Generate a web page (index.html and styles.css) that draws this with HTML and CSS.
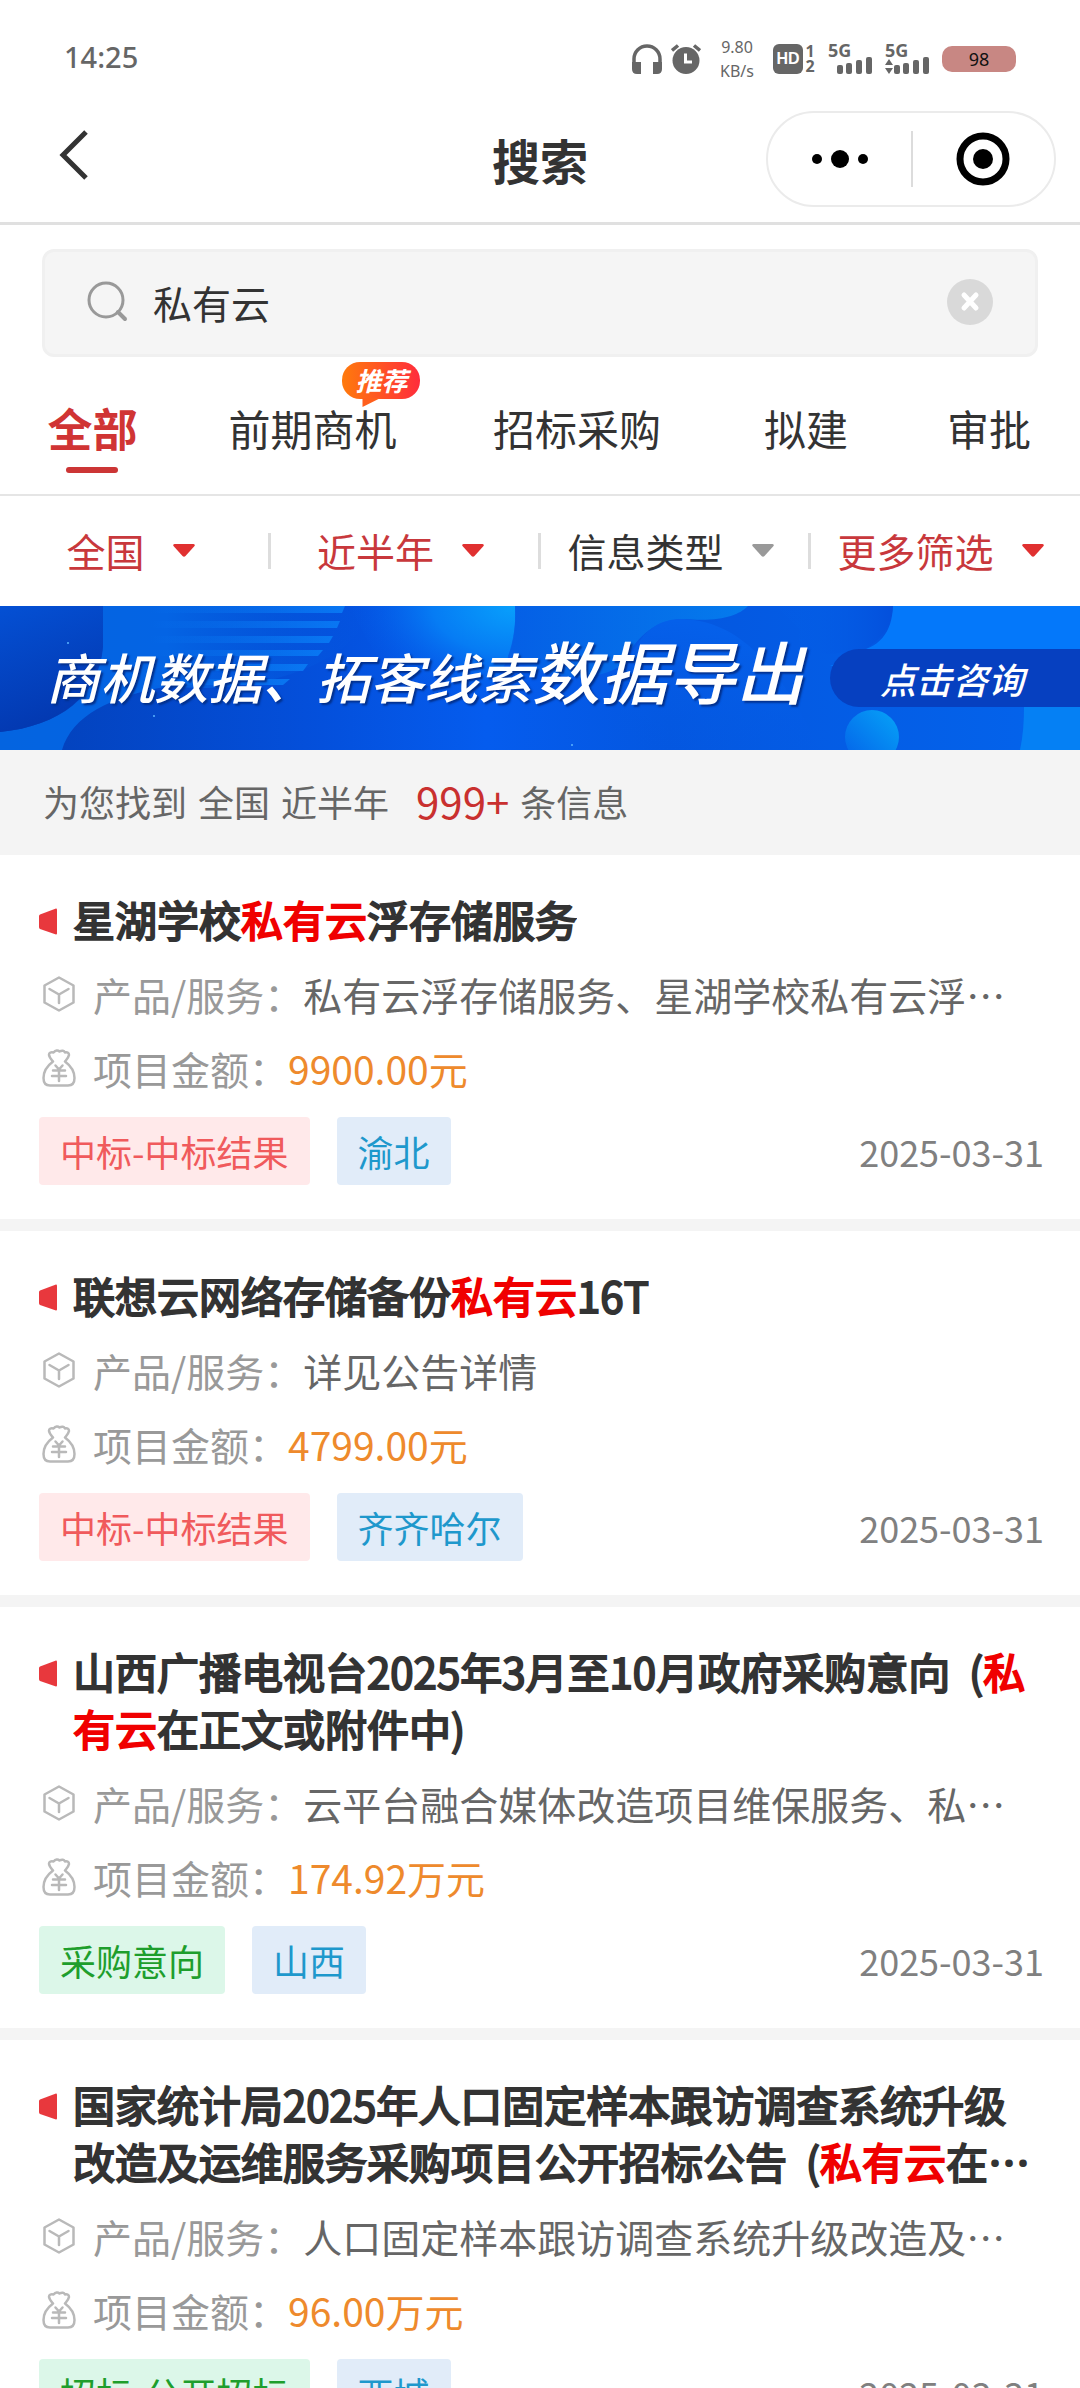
FILE: index.html
```html
<!DOCTYPE html>
<html lang="zh-CN">
<head>
<meta charset="utf-8">
<meta name="viewport" content="width=device-width, initial-scale=1">
<title>搜索</title>
<link rel="stylesheet" href="styles.css">
</head>
<body>
<svg class="defs" aria-hidden="true">
  <symbol id="i-flag" viewBox="0 0 18 27"><path d="M1 6.500Q0 7 0 8V19Q0 20.500 1 21L17 26.500Q18 26.500 18 25.500V1.500Q18 0.500 17 0.500Z" fill="#e8383d"/></symbol>
  <symbol id="i-box" viewBox="0 0 32 36"><g fill="none" stroke="#b9b9b9" stroke-width="2.500" stroke-linejoin="round" stroke-linecap="round"><path d="M16 1.500 30.500 9.500V26.500L16 34.500 1.500 26.500V9.500Z"/><path d="M6.500 13 16 18.500 25.500 13M16 18.500V27"/></g></symbol>
  <symbol id="i-bag" viewBox="0 0 34 38"><g fill="none" stroke="#b9b9b9" stroke-width="2.500" stroke-linejoin="round" stroke-linecap="round"><path d="M11 12.500C9 10 7 8 7 5.500C7 3.500 9 3 11.500 3.500C13.500 1 16 1 17.500 2.500C20 1 22 1.500 23 3.500C25.500 3 27 4 27 6C26.500 8.500 25 10 23 12.500C29 17 32.500 23 32.500 29C32.500 34.500 30 36.500 26 36.500H8C4 36.500 1.500 34.500 1.500 29C1.500 23 5 17 11 12.500Z"/><path d="M13.500 16.500 17 20.500 20.500 16.500M11 21.500H23M10 27H24M17 21V32"/></g></symbol>
  <symbol id="i-caret" viewBox="0 0 22 13"><path d="M1.500 0H20.500Q22.500 0.500 21.500 2L12.500 12Q11 13.500 9.500 12L0.500 2Q-0.500 0.500 1.500 0Z" fill="currentColor"/></symbol>
</svg>

<div class="app">
  <div class="status">
    <span class="clock">14:25</span>
    <div class="status-icons">
      <span class="modes">
        <svg width="30" height="30" viewBox="0 0 30 30"><path d="M2 20V15A13 13 0 0 1 28 15V20" fill="none" stroke="#666" stroke-width="3.500"/><path d="M0 18H9V30H5Q0 30 0 25ZM30 18H21V30H25Q30 30 30 25Z" fill="#666"/></svg>
        <svg width="30" height="30" viewBox="0 0 30 30"><circle cx="15" cy="16.500" r="13.500" fill="#666"/><path d="M1 6.500 7 1.500M29 6.500 23 1.500" stroke="#666" stroke-width="3.500"/><path d="M14.500 9.500V18H21" fill="none" stroke="#fff" stroke-width="3"/></svg>
      </span>
      <span class="speed"><span>9.80</span><span>KB/s</span></span>
      <span class="hd"><span class="hd-box">HD</span><span class="sims"><span>1</span><span>2</span></span></span>
      <span class="signal"><span class="net">5G</span><svg width="44" height="17" viewBox="0 0 44 17" fill="#666"><rect x="9" y="8" width="6" height="9" rx="2"/><rect x="18" y="6" width="6" height="11" rx="2"/><rect x="28" y="3" width="6" height="14" rx="2"/><rect x="38" y="0" width="6" height="17" rx="2"/></svg></span>
      <span class="signal"><span class="net">5G</span><svg width="44" height="17" viewBox="0 0 44 17" fill="#666"><path d="M0 8 4 2 8 8ZM0 11H8L4 17Z"/><rect x="9" y="8" width="6" height="9" rx="2"/><rect x="18" y="6" width="6" height="11" rx="2"/><rect x="28" y="3" width="6" height="14" rx="2"/><rect x="38" y="0" width="6" height="17" rx="2"/></svg></span>
      <span class="battery">98</span>
    </div>
  </div>

  <header class="nav">
    <button class="back" aria-label="返回"><svg width="32" height="50" viewBox="0 0 32 50"><path d="M28 2 5 25 28 48" fill="none" stroke="#333" stroke-width="5"/></svg></button>
    <h1>搜索</h1>
    <div class="capsule">
      <button aria-label="更多"><svg width="58" height="20" viewBox="0 0 58 20"><circle cx="6" cy="10" r="5"/><circle cx="29" cy="10" r="9"/><circle cx="52" cy="10" r="5"/></svg></button>
      <button aria-label="关闭"><svg width="54" height="54" viewBox="0 0 54 54"><circle cx="27" cy="27" r="23" fill="none" stroke="#000" stroke-width="7"/><circle cx="27" cy="27" r="10"/></svg></button>
    </div>
  </header>

  <form class="search">
    <svg width="42" height="42" viewBox="0 0 42 42" fill="none" stroke="#999" stroke-width="3" stroke-linecap="round"><circle cx="19" cy="19" r="17"/><path d="M31 31 38 38" stroke-width="4"/></svg>
    <input type="text" value="私有云" aria-label="搜索">
    <button type="reset" aria-label="清除"><svg width="46" height="46" viewBox="0 0 46 46"><circle cx="23" cy="23" r="23" fill="#d9d9d9"/><path d="M17 16 29 29M29 16 17 29" stroke="#fff" stroke-width="5" stroke-linecap="round"/></svg></button>
  </form>

  <nav class="tabs">
    <a href="#" class="tab active">全部</a>
    <a href="#" class="tab">前期商机<span class="badge">推荐</span></a>
    <a href="#" class="tab">招标采购</a>
    <a href="#" class="tab">拟建</a>
    <a href="#" class="tab">审批</a>
  </nav>

  <div class="filters">
    <button class="filter on">全国<svg width="22" height="13"><use href="#i-caret"/></svg></button>
    <button class="filter on">近半年<svg width="22" height="13"><use href="#i-caret"/></svg></button>
    <button class="filter">信息类型<svg width="22" height="13"><use href="#i-caret"/></svg></button>
    <button class="filter on">更多筛选<svg width="22" height="13"><use href="#i-caret"/></svg></button>
  </div>

  <a class="banner" href="#">
    <svg class="banner-art" viewBox="0 0 1080 144" preserveAspectRatio="none" aria-hidden="true">
      <defs>
        <linearGradient id="base"><stop offset="0" stop-color="#0340b8"/><stop offset=".3" stop-color="#0450dc"/><stop offset=".45" stop-color="#055cee"/><stop offset=".62" stop-color="#0457e0"/><stop offset="1" stop-color="#0464ec"/></linearGradient>
        <linearGradient id="left" x2=".3" y2="1"><stop offset="0" stop-color="#0450d4"/><stop offset="1" stop-color="#0338b0"/></linearGradient>
        <linearGradient id="band"><stop offset="0" stop-color="#0464e0"/><stop offset=".45" stop-color="#0464e4"/><stop offset="1" stop-color="#0458e0" stop-opacity="0"/></linearGradient>
        <linearGradient id="stripe"><stop offset="0" stop-color="#0a80f8" stop-opacity="0"/><stop offset="1" stop-color="#0a80f8" stop-opacity=".8"/></linearGradient>
        <radialGradient id="glow" cx="1" cy="0" r="1"><stop offset="0" stop-color="#08a0fc"/><stop offset=".5" stop-color="#067cf4"/><stop offset="1" stop-color="#055cea" stop-opacity="0"/></radialGradient>
        <linearGradient id="wave"><stop offset="0" stop-color="#0560e4"/><stop offset="1" stop-color="#0584f0"/></linearGradient>
        <linearGradient id="hill" x1=".3" x2="0" y2="1"><stop offset="0" stop-color="#0560ea"/><stop offset="1" stop-color="#0458e2" stop-opacity="0"/></linearGradient>
        <linearGradient id="blob"><stop offset="0" stop-color="#0462ea" stop-opacity="0"/><stop offset="1" stop-color="#0450dc"/></linearGradient>
        <linearGradient id="ball" x1="1" y1="0" x2="0" y2="1"><stop offset="0" stop-color="#06a4f8"/><stop offset="1" stop-color="#0460e8"/></linearGradient>
      </defs>
      <rect width="1080" height="144" fill="url(#base)"/>
      <path d="M103 0H370C360 60 250 90 170 80C110 90 72 110 62 144H0V126C60 120 100 90 103 40Z" fill="url(#band)"/>
      <path d="M0 0H103V40C98 90 60 120 0 126Z" fill="url(#left)"/>
      <g fill="url(#stripe)"><path d="M150 0H345L342 7H150Z"/><path d="M150 15H340L337 22H150Z"/><path d="M150 30H333L329 37H150Z"/><path d="M150 44H323L318 50H150Z"/><path d="M150 58H308L303 65H150Z"/><path d="M150 73H290L283 79H150Z"/></g>
      <path d="M350 0H515C517 36 508 66 480 90C440 110 390 90 350 0Z" fill="url(#glow)"/>
      <path d="M515 0H748C738 10 720 16 684 13C650 14 636 34 620 60C590 80 540 70 508 50C514 34 516 16 515 0Z" fill="url(#wave)" opacity=".8"/>
      <path d="M616 116C630 90 620 64 634 44C646 22 662 12 684 13C740 16 780 60 820 144H600Z" fill="url(#hill)"/>
      <path d="M893 0H1080V60H830C860 48 890 36 893 0Z" fill="#0478fa"/>
      <path d="M775 0H893C892 26 880 44 850 46C810 50 795 50 800 24Z" fill="url(#blob)"/>
      <circle cx="872" cy="131" r="27" fill="url(#ball)"/>
      <path d="M1024 101H1080V144H1020C1023 130 1024 116 1024 101Z" fill="#0580f4"/>
      <g fill="#5ab4ff"><circle cx="68" cy="37" r="1"/><circle cx="154" cy="110" r="1"/><circle cx="572" cy="139" r="1"/></g>
    </svg>
    <span class="slogan">商机数据、拓客线索<strong>数据导出</strong></span>
    <span class="consult">点击咨询</span>
  </a>

  <p class="summary"><span>为您找到</span><span>全国</span><span>近半年</span><span class="count">999+</span><span>条信息</span></p>

  <ul class="results">
    <li class="card">
      <h2><svg class="flag" width="18" height="27"><use href="#i-flag"/></svg><a href="#">星湖学校<em>私有云</em>浮存储服务</a></h2>
      <div class="row"><svg width="34" height="36"><use href="#i-box"/></svg><span>产品/服务：</span><span class="value">私有云浮存储服务、星湖学校私有云浮存储服务项目</span></div>
      <div class="row"><svg width="34" height="38"><use href="#i-bag"/></svg><span>项目金额：</span><span class="money">9900.00元</span></div>
      <div class="foot"><span class="tag red">中标-中标结果</span><span class="tag blue">渝北</span><time>2025-03-31</time></div>
    </li>
    <li class="card">
      <h2><svg class="flag" width="18" height="27"><use href="#i-flag"/></svg><a href="#">联想云网络存储备份<em>私有云</em>16T</a></h2>
      <div class="row"><svg width="34" height="36"><use href="#i-box"/></svg><span>产品/服务：</span><span class="value">详见公告详情</span></div>
      <div class="row"><svg width="34" height="38"><use href="#i-bag"/></svg><span>项目金额：</span><span class="money">4799.00元</span></div>
      <div class="foot"><span class="tag red">中标-中标结果</span><span class="tag blue">齐齐哈尔</span><time>2025-03-31</time></div>
    </li>
    <li class="card">
      <h2><svg class="flag" width="18" height="27"><use href="#i-flag"/></svg><a href="#">山西广播电视台2025年3月至10月政府采购意向&nbsp; (<em>私有云</em>在正文或附件中)</a></h2>
      <div class="row"><svg width="34" height="36"><use href="#i-box"/></svg><span>产品/服务：</span><span class="value">云平台融合媒体改造项目维保服务、私有云平台维保服务</span></div>
      <div class="row"><svg width="34" height="38"><use href="#i-bag"/></svg><span>项目金额：</span><span class="money">174.92万元</span></div>
      <div class="foot"><span class="tag green">采购意向</span><span class="tag blue">山西</span><time>2025-03-31</time></div>
    </li>
    <li class="card">
      <h2><svg class="flag" width="18" height="27"><use href="#i-flag"/></svg><a href="#">国家统计局2025年人口固定样本跟访调查系统升级改造及运维服务采购项目公开招标公告&nbsp; (<em>私有云</em>在正文或附件中)</a></h2>
      <div class="row"><svg width="34" height="36"><use href="#i-box"/></svg><span>产品/服务：</span><span class="value">人口固定样本跟访调查系统升级改造及运维服务</span></div>
      <div class="row"><svg width="34" height="38"><use href="#i-bag"/></svg><span>项目金额：</span><span class="money">96.00万元</span></div>
      <div class="foot"><span class="tag green">招标-公开招标</span><span class="tag blue">西城</span><time>2025-03-31</time></div>
    </li>
  </ul>
</div>
</body>
</html>
```
FILE: styles.css
```css
* {
  box-sizing: border-box;
}

body {
  margin: 0;
  background: #fff;
  color: #333;
  font-family: "Noto Sans CJK SC", sans-serif;
}

h1,
h2,
p,
ul {
  margin: 0;
  padding: 0;
}

a {
  color: inherit;
  text-decoration: none;
}

em {
  font-style: normal;
}

button,
input {
  padding: 0;
  border: 0;
  background: none;
  color: inherit;
  font: inherit;
}

svg {
  display: block;
  flex: none;
}

.defs {
  display: none;
}

.app {
  display: flex;
  flex-direction: column;
  height: 100vh;
  overflow: hidden;
}

.app > * {
  flex: none;
}

/* System status bar */
.status {
  display: flex;
  align-items: center;
  justify-content: space-between;
  height: 100px;
  padding: 18px 64px 0;
  color: #666;
}

.clock {
  padding-bottom: 4px;
  font: 500 29px/30px "Noto Sans", sans-serif;
}

.status-icons {
  display: flex;
  align-items: center;
  gap: 13px;
}

.modes {
  display: flex;
  gap: 9px;
}

.speed {
  display: flex;
  flex-direction: column;
  align-items: center;
  gap: 8px;
  width: 36px;
  margin: 0 5px;
  font: 16px/16px "Noto Sans", sans-serif;
}

.hd {
  display: flex;
  gap: 2px;
}

.hd-box {
  width: 30px;
  height: 30px;
  border-radius: 6px;
  background: #666;
  color: #fff;
  font: 700 16px/30px "Liberation Sans", sans-serif;
  text-align: center;
}

.sims {
  display: flex;
  flex-direction: column;
  width: 10px;
  font: 700 16px/15px "Noto Sans", sans-serif;
  text-align: center;
}

.signal {
  display: flex;
  flex-direction: column;
  height: 30px;
  font: 700 18px/13px "Noto Sans", sans-serif;
}

.battery {
  width: 74px;
  height: 26px;
  border-radius: 10px;
  background: #c88783;
  color: #111;
  font: 18px/26px "Noto Sans", sans-serif;
  text-align: center;
}

/* Title bar */
.nav {
  display: grid;
  grid-template-columns: 1fr auto 1fr;
  align-items: center;
  height: 125px;
  padding: 0 24px 4px;
  border-bottom: 3px solid #e0e0e0;
}

.nav h1 {
  font-size: 48px;
  line-height: 60px;
}

.back {
  justify-self: start;
  padding: 0 0 8px 34px;
}

.capsule {
  display: flex;
  justify-self: end;
  width: 290px;
  height: 96px;
  border: 2px solid #ebebeb;
  border-radius: 48px;
}

.capsule button {
  display: flex;
  flex: 1;
  align-items: center;
  justify-content: center;
  position: relative;
}

.capsule button + button::before {
  content: "";
  position: absolute;
  top: 18px;
  bottom: 18px;
  left: 0;
  width: 2px;
  background: #dcdcdc;
}

/* Search box */
.search {
  display: flex;
  align-items: center;
  height: 108px;
  margin: 24px 42px 0;
  padding: 0 42px 2px;
  border: 3px solid #f0f0f0;
  border-radius: 12px;
  background: #f5f5f5;
}

.search input {
  flex: 1;
  min-width: 0;
  height: 60px;
  margin-left: 24px;
  font-size: 39px;
  line-height: 60px;
  outline: 0;
}

/* Category tabs */
.tabs {
  display: grid;
  grid-template-columns: 185fr 255fr 274fr 184fr 182fr;
  justify-items: center;
  height: 139px;
  padding-top: 41px;
  border-bottom: 2px solid #e5e5e5;
}

.tab {
  position: relative;
  height: 75px;
  font-size: 42px;
  line-height: 60px;
  white-space: nowrap;
}

.tab.active {
  color: #d03434;
  font-size: 45px;
  font-weight: 700;
}

.tab.active::after {
  content: "";
  position: absolute;
  bottom: 0;
  left: 50%;
  width: 52px;
  height: 6px;
  margin-left: -26px;
  border-radius: 3px;
  background: #cc3535;
}

.badge {
  position: absolute;
  top: -36px;
  left: 114px;
  width: 78px;
  height: 37px;
  border-radius: 18px;
  background: linear-gradient(90deg, #ff7a0c, #ff2c3c);
  color: #fff;
  font-size: 26px;
  font-style: italic;
  font-weight: 700;
  line-height: 36px;
  text-align: center;
}

.badge::after {
  content: "";
  position: absolute;
  top: 36px;
  left: 18px;
  width: 20px;
  height: 9px;
  background: #ff5f1c;
  clip-path: polygon(10% 0, 100% 0, 10% 100%);
}

/* Filters */
.filters {
  display: grid;
  grid-template-columns: repeat(4, 1fr);
  height: 110px;
}

.filter {
  display: flex;
  align-items: center;
  justify-content: center;
  gap: 28px;
  position: relative;
  padding: 0 9px 2px 0;
  font-size: 39px;
  line-height: 60px;
  white-space: nowrap;
}

.filter svg {
  color: #999;
}

.filter.on {
  color: #c8383c;
}

.filter.on svg {
  color: #e03030;
}

.filter + .filter::before {
  content: "";
  position: absolute;
  top: 37px;
  left: -2px;
  width: 3px;
  height: 36px;
  background: #ddd;
}

/* Promotion banner */
.banner {
  display: flex;
  align-items: center;
  justify-content: space-between;
  position: relative;
  height: 144px;
  padding-left: 46px;
  color: #fff;
  font-style: italic;
  font-weight: 500;
}

.banner-art {
  position: absolute;
  inset: 0;
  width: 100%;
  height: 100%;
}

.slogan,
.consult {
  position: relative;
  white-space: nowrap;
}

.slogan {
  padding-bottom: 11px;
  font-size: 54px;
  line-height: 80px;
  text-shadow: 2px 2px 2px #03308c;
}

.slogan strong {
  font-size: 68px;
  font-weight: 500;
}

.consult {
  width: 250px;
  padding-left: 50px;
  border-radius: 29px 0 0 29px;
  background: #0640c0;
  font-size: 36px;
  line-height: 58px;
}

/* Result count */
.summary {
  display: flex;
  align-items: center;
  gap: 11px;
  height: 105px;
  padding: 0 43px 3px;
  background: #f4f4f4;
  color: #666;
  font-size: 36px;
  line-height: 60px;
}

.count {
  margin-left: 16px;
  color: #c9302f;
  font-size: 42px;
}

/* Result cards */
.results {
  display: flex;
  flex-direction: column;
  gap: 12px;
  background: #f4f4f4;
  list-style: none;
}

.card {
  padding: 35px 36px 34px 39px;
  background: #fff;
}

.card h2 {
  display: flex;
  gap: 16px;
  margin-bottom: 10px;
  font-size: 42px;
  font-weight: 400;
  line-height: 57px;
}

/* The padding keeps the clamp from clipping glyphs taller than the line */
.card h2 a {
  display: -webkit-box;
  overflow: hidden;
  margin: -4px 0;
  padding: 4px 0;
  -webkit-box-orient: vertical;
  -webkit-line-clamp: 2;
  -webkit-text-stroke: 2px currentColor;
}

.card em {
  color: #f00000;
}

.flag {
  margin-top: 18px;
}

.row {
  display: flex;
  align-items: center;
  padding-left: 3px;
  color: #999;
  font-size: 39px;
  line-height: 74px;
  white-space: nowrap;
}

.row svg {
  margin-right: 17px;
}

.value {
  overflow: hidden;
  color: #666;
  text-overflow: ellipsis;
}

.money {
  color: #ee8a2c;
}

.foot {
  display: flex;
  align-items: center;
  gap: 27px;
  margin-top: 12px;
  font-size: 36px;
  line-height: 68px;
}

.foot time {
  margin-left: auto;
  color: #808080;
}

.tag {
  padding: 0 21px;
  border-radius: 4px;
}

.red {
  background: #ffe9ea;
  color: #f05a5c;
}

.blue {
  background: #e1ecf9;
  color: #1e98cc;
}

.green {
  background: #dcf7e9;
  color: #1e9e2c;
}
```
